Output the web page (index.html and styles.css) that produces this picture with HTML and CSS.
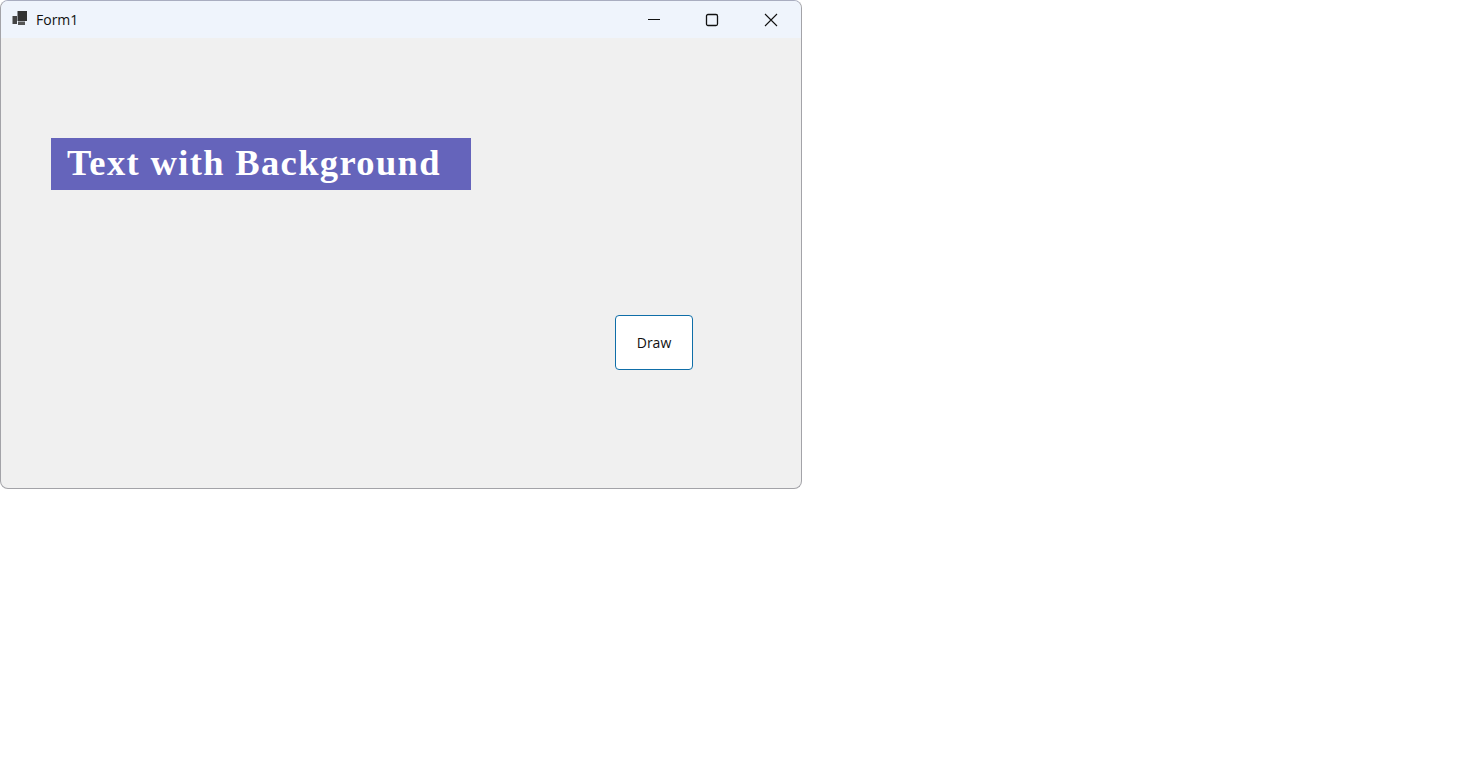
FILE: index.html
```html
<!DOCTYPE html>
<html lang="en">
<head>
  <meta charset="UTF-8">
  <title>Form1</title>
  <link rel="stylesheet" href="styles.css">
</head>
<body>
  <div class="window">
    <div class="titlebar">
      <svg class="app-icon" width="16" height="15" viewBox="0 0 16 15">
        <rect x="0.5" y="5" width="4.5" height="8" fill="#444"/>
        <rect x="5.5" y="0" width="9.5" height="10" fill="#333"/>
        <rect x="6" y="10.5" width="7" height="3.5" fill="#555"/>
      </svg>
      <span class="title">Form1</span>
      <div class="controls">
        <button class="control" type="button">
          <svg width="14" height="14" viewBox="0 0 14 14"><path d="M1 6.5H13" stroke="#111" stroke-width="1.2" fill="none"/></svg>
        </button>
        <button class="control" type="button">
          <svg width="14" height="14" viewBox="0 0 14 14"><rect x="1.5" y="1.5" width="11" height="11" rx="1.5" stroke="#111" stroke-width="1.3" fill="none"/></svg>
        </button>
        <button class="control" type="button">
          <svg width="14" height="14" viewBox="0 0 14 14"><path d="M1 1L13 13M13 1L1 13" stroke="#111" stroke-width="1.1" fill="none"/></svg>
        </button>
      </div>
    </div>
    <div class="client">
      <div class="banner">Text with Background</div>
      <button class="draw-btn" type="button">Draw</button>
    </div>
  </div>
</body>
</html>
```

FILE: styles.css
```css
body {
  margin: 0;
  background-color: #fff;
  font-family: "Open Sans", "Noto Sans", sans-serif;
}

.window {
  box-sizing: border-box;
  width: 802px;
  height: 489px;
  border: 1px solid #a3a3a8;
  border-top-color: #a9adc0;
  border-radius: 8px;
  background-color: #f0f0f0;
  overflow: hidden;
}

.titlebar {
  display: flex;
  align-items: center;
  height: 37px;
  padding-left: 11px;
  background-color: #eff4fc;
}

.app-icon {
  margin-right: 8px;
  margin-top: -2px;
}

.title {
  font-size: 14px;
  color: #111;
}

.controls {
  display: flex;
  margin-left: auto;
  margin-right: 1px;
}

.control {
  display: flex;
  align-items: center;
  justify-content: center;
  width: 58.5px;
  height: 37px;
  padding: 0;
  border: none;
  background: none;
}

.client {
  padding: 100px 0 0 50px;
}

.banner {
  box-sizing: border-box;
  width: 420px;
  height: 52px;
  padding-left: 16px;
  background-color: #6564bb;
  color: #fff;
  font-family: "Liberation Serif", serif;
  font-weight: bold;
  font-size: 36.5px;
  letter-spacing: 1.35px;
  line-height: 49px;
  white-space: nowrap;
}

.draw-btn {
  display: block;
  box-sizing: border-box;
  width: 78px;
  height: 55px;
  margin: 125px 0 0 564px;
  padding: 0;
  border: 1px solid #0f6ea8;
  border-radius: 4px;
  background-color: #fff;
  color: #111;
  font-family: "Open Sans", "Noto Sans", sans-serif;
  font-size: 14px;
}
```
